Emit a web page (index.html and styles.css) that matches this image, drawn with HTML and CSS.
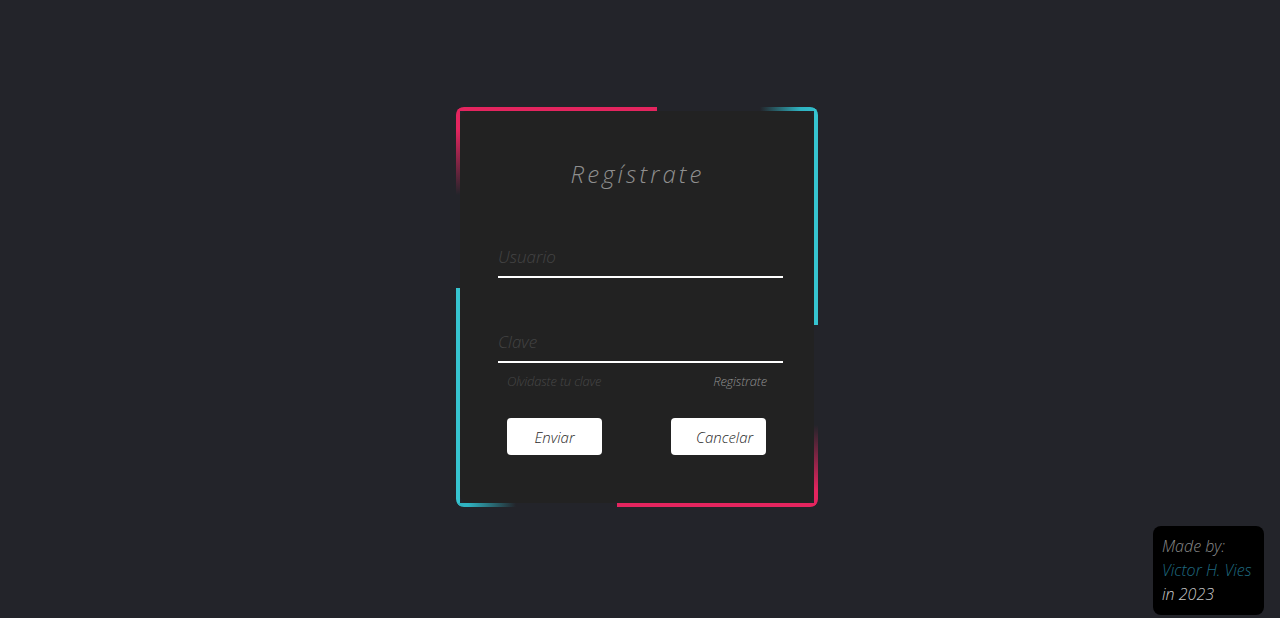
FILE: index.html
```html
<!DOCTYPE html>
<html lang="es">
<head>
<meta charset="utf-8">
<title>Regístrate</title>
<link rel="stylesheet" href="styles.css">
</head>
<body>
<main class="stage">
  <div class="box">
    <span class="edge pink-top"></span>
    <span class="edge pink-left"></span>
    <span class="edge teal-top"></span>
    <span class="edge teal-right"></span>
    <span class="edge teal-left"></span>
    <span class="edge teal-bottom"></span>
    <span class="edge pink-bottom"></span>
    <span class="edge pink-right"></span>
    <form class="card">
      <h2 class="title">Regístrate</h2>
      <div class="field">
        <input type="text" class="input" placeholder="Usuario">
      </div>
      <div class="field field-second">
        <input type="password" class="input" placeholder="Clave">
      </div>
      <div class="links">
        <a class="link dim" href="#">Olvidaste tu clave</a>
        <a class="link" href="#">Registrate</a>
      </div>
      <div class="actions">
        <button type="button" class="btn">Enviar</button>
        <button type="button" class="btn">Cancelar</button>
      </div>
    </form>
  </div>
</main>
<aside class="credit">
  <p class="credit-line">Made by:</p>
  <p class="credit-line author">Victor H. Vies</p>
  <p class="credit-line year">in 2023</p>
</aside>
</body>
</html>
```

FILE: styles.css
```css
* { box-sizing: border-box; }

html, body {
  margin: 0;
  height: 100%;
}

body {
  background: #23242a;
  font-family: "Open Sans", "DejaVu Sans", sans-serif;
  overflow: hidden;
}

.stage {
  height: 618px;
  display: flex;
  align-items: center;
  justify-content: center;
}

.box {
  position: relative;
  width: 362px;
  height: 400px;
  margin-right: 6px;
  margin-bottom: 4px;
  padding: 4px;
  border-radius: 8px;
  overflow: hidden;
  background: #23242a;
}

.edge {
  position: absolute;
  display: block;
}

.pink-top {
  left: 0; top: 0;
  width: 201px; height: 4px;
  background: #e4255f;
}
.pink-left {
  left: 0; top: 0;
  width: 4px; height: 88px;
  background: linear-gradient(to bottom, #e4255f 0%, #e4255f 25%, rgba(228,37,95,0) 100%);
}
.teal-top {
  right: 0; top: 0;
  width: 58px; height: 4px;
  background: linear-gradient(to right, rgba(47,184,196,0) 0%, #2fb3c1 70%, #32bfcc 100%);
}
.teal-right {
  right: 0; top: 0;
  width: 4px; height: 218px;
  background: #36c4d0;
}
.teal-left {
  left: 0; top: 181px;
  width: 4px; height: 219px;
  background: #36c4d0;
}
.teal-bottom {
  left: 0; bottom: 0;
  width: 60px; height: 4px;
  background: linear-gradient(to right, #2fb3c1 0%, #2fb3c1 20%, rgba(47,184,196,0) 100%);
}
.pink-bottom {
  right: 0; bottom: 0;
  width: 201px; height: 4px;
  background: #e4255f;
}
.pink-right {
  right: 0; bottom: 0;
  width: 4px; height: 82px;
  background: linear-gradient(to top, #e4255f 0%, #e4255f 20%, rgba(228,37,95,0) 100%);
}

.card {
  position: relative;
  z-index: 1;
  height: 100%;
  margin: 0;
  background: #222222;
  border-radius: 8px;
  padding: 49px 31px 0 38px;
  display: flex;
  flex-direction: column;
}

.title {
  margin: 0;
  font-size: 24px;
  font-weight: 300;
  font-style: italic;
  letter-spacing: 3.1px;
  line-height: 28px;
  color: #8f8f8f;
  text-align: center;
  padding-right: 6px;
}

.field {
  margin-top: 56px;
  width: 285px;
}
.field-second {
  margin-top: 51px;
}

.input {
  display: block;
  width: 100%;
  height: 34px;
  padding: 0 0 7px 0;
  border: 0;
  border-bottom: 2px solid #ffffff;
  background: transparent;
  font-family: inherit;
  font-size: 17px;
  font-weight: 300;
  font-style: italic;
  color: #ddd;
  outline: none;
}
.input::placeholder {
  color: #444444;
}

.links {
  display: flex;
  justify-content: space-between;
  margin-top: 9px;
  padding: 0 16px 0 9px;
}
.link {
  font-size: 13px;
  font-weight: 300;
  font-style: italic;
  line-height: 18px;
  color: #8f8f8f;
  text-decoration: none;
  letter-spacing: -0.2px;
}
.link.dim {
  color: #474747;
}

.actions {
  display: flex;
  justify-content: space-between;
  margin-top: 28px;
  padding: 0 17px 0 9px;
}
.btn {
  width: 95px;
  height: 37px;
  padding: 0 25px;
  border: 0;
  border-radius: 4px;
  background: #ffffff;
  font-family: inherit;
  font-size: 15px;
  font-weight: 300;
  font-style: italic;
  color: #2a2a2a;
  white-space: nowrap;
  text-align: center;
  cursor: pointer;
}

.credit {
  position: fixed;
  right: 16px;
  bottom: 3px;
  width: 111px;
  height: 89px;
  padding: 8px 0 0 9px;
  background: #000;
  border-radius: 8px;
}
.credit-line {
  margin: 0;
  font-size: 16px;
  font-weight: 300;
  font-style: italic;
  line-height: 24px;
  color: #8a8a8a;
  white-space: nowrap;
}
.credit-line.author {
  color: #1f6b80;
}
.credit-line.year {
  color: #c8c8c8;
}
```
